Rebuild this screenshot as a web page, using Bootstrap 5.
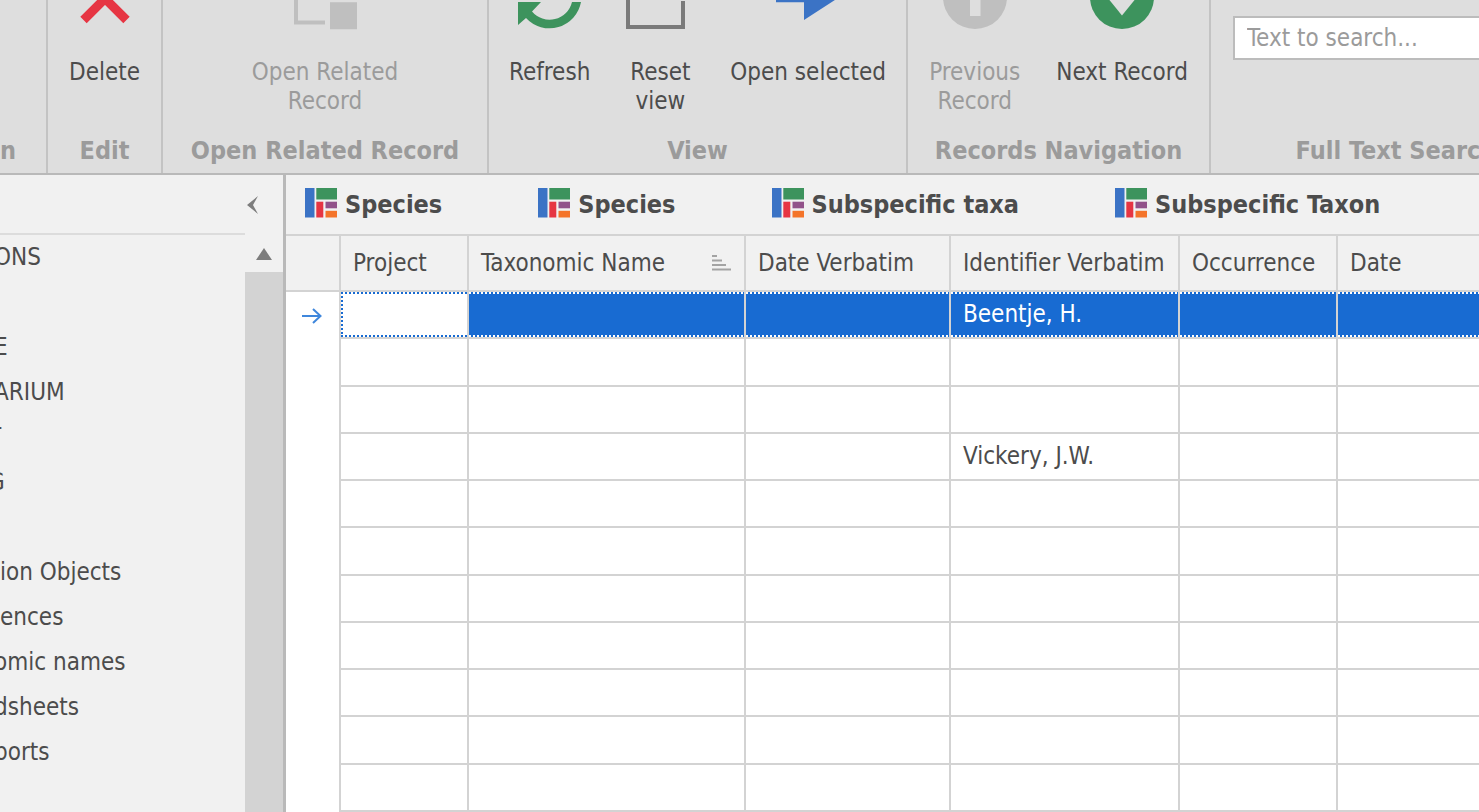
<!DOCTYPE html>
<html lang="en">
<head>
<meta charset="utf-8">
<meta name="viewport" content="width=device-width, initial-scale=1">
<title>Species records</title>
<link href="https://cdn.jsdelivr.net/npm/bootstrap@5.3.0/dist/css/bootstrap.min.css" rel="stylesheet">
<style>
  :root { --ink: #4c4c4c; --line: #d3d3d3; --frame: #b9b9b9; --pane: #f1f1f1; --pick: #186bd2; }
  body { font-family: "DejaVu Sans Condensed", "Noto Sans", sans-serif; font-size: 24px; line-height: 29px; color: var(--ink); }
  button { color: inherit; }

  .ribbon { background: #dedede; border-bottom: 2px solid var(--frame); height: 175px; }
  .ribbon-group { border-right: 2px solid #c3c3c3; padding-bottom: 8px; }
  .group-title { font-weight: bold; color: #9b9b9b; font-size: 25px; white-space: nowrap; }
  .g-first { width: 48px; padding-right: 30px; }
  .g-edit { width: 115px; }
  .g-related { width: 326px; }
  .g-view { width: 419px; }
  .g-nav { width: 303px; }
  .g-search { width: 372px; }
  .gap-tools { column-gap: 36px; }
  .tool { border: 0; background: none; padding: 0; }
  .tool svg { display: block; margin: 0 auto 28px; }
  .tool:disabled { color: #9b9b9b; }
  .search-box { margin: 16px 0 0 22px; height: 44px; width: 328px; border: 2px solid #bcbcbc; padding: 0 12px; background: #fff; color: inherit; }
  .search-box::placeholder { color: #9b9b9b; opacity: 1; }

  .side { width: 286px; background: var(--pane); border-right: 3px solid var(--frame); }
  .side-head { height: 60px; border-bottom: 2px solid #dcdcdc; }
  .side-nav a { display: block; height: 45px; line-height: 45px; color: var(--ink); text-decoration: none; white-space: nowrap; }
  .side-nav .cut { margin-left: -6px; }
  .side-nav .cut-more { margin-left: -12px; }
  .side-rail { width: 38px; }
  .side-fold { height: 60px; }
  .side-up { height: 37px; }
  .side-thumb { background: var(--line); }

  .tabs { background: var(--pane); border-bottom: 2px solid var(--line); height: 61px; padding-left: 19px; column-gap: 96px; }
  .tab { border: 0; background: none; padding: 0; font-weight: bold; column-gap: 8px; font-size: 25px; }

  .records { table-layout: fixed; border-collapse: separate; border-spacing: 0; }
  .records th, .records td { height: 47px; border-right: 2px solid var(--line); border-bottom: 2px solid var(--line); padding: 0 12px; font-weight: normal; white-space: nowrap; vertical-align: middle; }
  .records tr > :last-child { border-right: 0; }
  .records thead th { background: var(--pane); height: 56px; }
  .records .mark-cell { border-bottom: 0; padding: 0; text-align: center; }
  .records thead .mark-cell { border-bottom: 2px solid var(--line); }
  .records .picked td { color: #fff; background: repeating-linear-gradient(90deg, #fff 0 2px, var(--pick) 2px 4px) top / 100% 2px no-repeat, repeating-linear-gradient(90deg, #fff 0 2px, var(--pick) 2px 4px) bottom / 100% 2px no-repeat, var(--pick); background-clip: padding-box; background-origin: padding-box; }
  .records .picked td.focus-cell { background: repeating-linear-gradient(90deg, var(--pick) 0 2px, #fff 2px 4px) top / 100% 2px no-repeat, repeating-linear-gradient(90deg, var(--pick) 0 2px, #fff 2px 4px) bottom / 100% 2px no-repeat, repeating-linear-gradient(180deg, var(--pick) 0 2px, #fff 2px 4px) left / 2px 100% no-repeat, #fff; }
  .c-mark { width: 55px; } .c-project { width: 128px; } .c-taxon { width: 277px; } .c-datev { width: 205px; } .c-ident { width: 229px; } .c-occ { width: 158px; }
</style>
</head>
<body class="vh-100 d-flex flex-column overflow-hidden">

<svg class="d-none" aria-hidden="true">
  <symbol id="view-icon" viewBox="0 0 32 30">
    <path fill="#3b73c5" d="M0 0h9.500v29.500H0z"/><path fill="#3d935d" d="M11.300 0H32v11.500H11.300z"/>
    <path fill="#e63543" d="M11.300 13.700h7v15.800h-7z"/><path fill="#92528a" d="M20.500 13.700H32v6.600H20.500z"/><path fill="#f4742a" d="M20.500 22.800H32v6.700H20.500z"/>
  </symbol>
</svg>

<header class="ribbon d-flex flex-shrink-0 overflow-hidden">
  <section class="ribbon-group g-first flex-shrink-0 d-flex flex-column justify-content-end align-items-end"><div class="group-title">on</div></section>

  <section class="ribbon-group g-edit flex-shrink-0 d-flex flex-column justify-content-between align-items-center">
    <button class="tool" type="button">
      <svg width="64" height="30" viewBox="0 0 64 30"><path d="M10.500 20 32-1.500 53.500 20" fill="none" stroke="#e63543" stroke-width="9"/></svg>Delete</button>
    <div class="group-title">Edit</div>
  </section>

  <section class="ribbon-group g-related flex-shrink-0 d-flex flex-column justify-content-between align-items-center">
    <button class="tool" type="button" disabled>
      <svg width="66" height="30" viewBox="0 0 66 30" fill="#bfbfbf"><path d="M2 0h4v20.500h27v4H2zM38 2.300h27v27H38z"/></svg>Open Related<br>Record</button>
    <div class="group-title">Open Related Record</div>
  </section>

  <section class="ribbon-group g-view flex-shrink-0 d-flex flex-column justify-content-between align-items-center">
    <div class="d-flex align-items-start gap-tools">
      <button class="tool" type="button">
        <svg width="64" height="30" viewBox="0 0 64 30"><path fill="#3d935d" d="M63 2A32 32 0 0 1 8 18L0 25V2h23l-9 9.500A23 23 0 0 0 54 2z"/></svg>Refresh</button>
      <button class="tool" type="button">
        <svg width="68" height="30" viewBox="0 0 68 30"><path fill="none" stroke="#7a7a7a" stroke-width="4" d="M2-5v32h55V1"/></svg>Reset<br>view</button>
      <button class="tool" type="button">
        <svg width="64" height="30" viewBox="0 0 64 30"><path fill="#3b73c5" d="M0-2h62L28 20V2.300H0z"/></svg>Open selected</button>
    </div>
    <div class="group-title">View</div>
  </section>

  <section class="ribbon-group g-nav flex-shrink-0 d-flex flex-column justify-content-between align-items-center">
    <div class="d-flex align-items-start gap-tools">
      <button class="tool" type="button" disabled>
        <svg width="64" height="30" viewBox="0 0 64 30"><circle cx="32" cy="-3" r="32" fill="#bfbfbf"/><path fill="#dedede" d="M27-2h10.500v18H27z"/></svg>Previous<br>Record</button>
      <button class="tool" type="button">
        <svg width="64" height="30" viewBox="0 0 64 30"><circle cx="32" cy="-3" r="32" fill="#3d935d"/><path fill="#dedede" d="M17-3h30L32 15.500z"/></svg>Next Record</button>
    </div>
    <div class="group-title">Records Navigation</div>
  </section>

  <section class="ribbon-group g-search flex-shrink-0 d-flex flex-column justify-content-between">
    <input class="search-box" type="text" placeholder="Text to search..." aria-label="Text to search">
    <div class="group-title text-center">Full Text Search</div>
  </section>
</header>

<div class="d-flex flex-grow-1 overflow-hidden">
  <aside class="side d-flex flex-shrink-0 overflow-hidden">
    <div class="flex-grow-1 overflow-hidden">
      <div class="side-head"></div>
      <nav class="side-nav">
        <a class="cut" href="#">ONS</a>
        <a href="#">&nbsp;</a>
        <a class="cut" href="#">E</a>
        <a class="cut" href="#">ARIUM</a>
        <a class="cut-more" href="#">T</a>
        <a class="cut-more" href="#">G</a>
        <a href="#">&nbsp;</a>
        <a href="#">ion Objects</a>
        <a href="#">ences</a>
        <a class="cut" href="#">omic names</a>
        <a class="cut" href="#">dsheets</a>
        <a class="cut" href="#">ports</a>
      </nav>
    </div>
    <div class="side-rail d-flex flex-column flex-shrink-0">
      <button class="tool side-fold" type="button" aria-label="Collapse panel"><svg class="ms-0 mb-0" width="16" height="18" viewBox="0 0 16 18"><path fill="#7d7d7d" d="M2 9 13 0 8 9l5 9z"/></svg></button>
      <button class="tool side-up" type="button" aria-label="Scroll up"><svg class="mb-0" width="16" height="12" viewBox="0 0 16 12"><path fill="#7d7d7d" d="M8 0l8 12H0z"/></svg></button>
      <div class="side-thumb flex-grow-1"></div>
    </div>
  </aside>

  <main class="flex-grow-1 d-flex flex-column overflow-hidden bg-white">
    <div class="tabs d-flex flex-shrink-0" role="tablist">
      <button class="tab d-flex align-items-center flex-shrink-0" type="button" role="tab"><svg class="mb-1" width="32" height="30"><use href="#view-icon"/></svg>Species</button>
      <button class="tab d-flex align-items-center flex-shrink-0" type="button" role="tab"><svg class="mb-1" width="32" height="30"><use href="#view-icon"/></svg>Species</button>
      <button class="tab d-flex align-items-center flex-shrink-0" type="button" role="tab"><svg class="mb-1" width="32" height="30"><use href="#view-icon"/></svg>Subspecific taxa</button>
      <button class="tab d-flex align-items-center flex-shrink-0" type="button" role="tab"><svg class="mb-1" width="32" height="30"><use href="#view-icon"/></svg>Subspecific Taxon</button>
    </div>
    <div class="flex-grow-1">
      <table class="records w-100 h-100">
        <colgroup><col class="c-mark"><col class="c-project"><col class="c-taxon"><col class="c-datev"><col class="c-ident"><col class="c-occ"><col></colgroup>
        <thead>
          <tr>
            <th class="mark-cell"></th><th>Project</th>
            <th><div class="d-flex justify-content-between align-items-center">Taxonomic Name
              <svg width="20" height="18" viewBox="0 0 20 18" fill="#a3a3a3"><path d="M0 1h5v2H0zM0 5.500h10v2H0zM0 10h14v2H0zM0 14.500h19v2H0z"/></svg></div></th>
            <th>Date Verbatim</th><th>Identifier Verbatim</th><th>Occurrence</th><th>Date</th>
          </tr>
        </thead>
        <tbody>
          <tr class="picked">
            <th class="mark-cell"><svg class="d-block mx-auto" width="22" height="18" viewBox="0 0 22 18"><path d="M0 9h19M11 2l7.500 7L11 16" fill="none" stroke="#3f87dc" stroke-width="2"/></svg></th>
            <td class="focus-cell"></td><td></td><td></td><td>Beentje, H.</td><td></td><td></td>
          </tr>
          <tr><th class="mark-cell"></th><td></td><td></td><td></td><td></td><td></td><td></td></tr>
          <tr><th class="mark-cell"></th><td></td><td></td><td></td><td></td><td></td><td></td></tr>
          <tr><th class="mark-cell"></th><td></td><td></td><td></td><td>Vickery, J.W.</td><td></td><td></td></tr>
          <tr><th class="mark-cell"></th><td></td><td></td><td></td><td></td><td></td><td></td></tr>
          <tr><th class="mark-cell"></th><td></td><td></td><td></td><td></td><td></td><td></td></tr>
          <tr><th class="mark-cell"></th><td></td><td></td><td></td><td></td><td></td><td></td></tr>
          <tr><th class="mark-cell"></th><td></td><td></td><td></td><td></td><td></td><td></td></tr>
          <tr><th class="mark-cell"></th><td></td><td></td><td></td><td></td><td></td><td></td></tr>
          <tr><th class="mark-cell"></th><td></td><td></td><td></td><td></td><td></td><td></td></tr>
          <tr><th class="mark-cell"></th><td></td><td></td><td></td><td></td><td></td><td></td></tr>
        </tbody>
      </table>
    </div>
  </main>
</div>

<script src="https://cdn.jsdelivr.net/npm/bootstrap@5.3.0/dist/js/bootstrap.bundle.min.js"></script>
</body>
</html>
